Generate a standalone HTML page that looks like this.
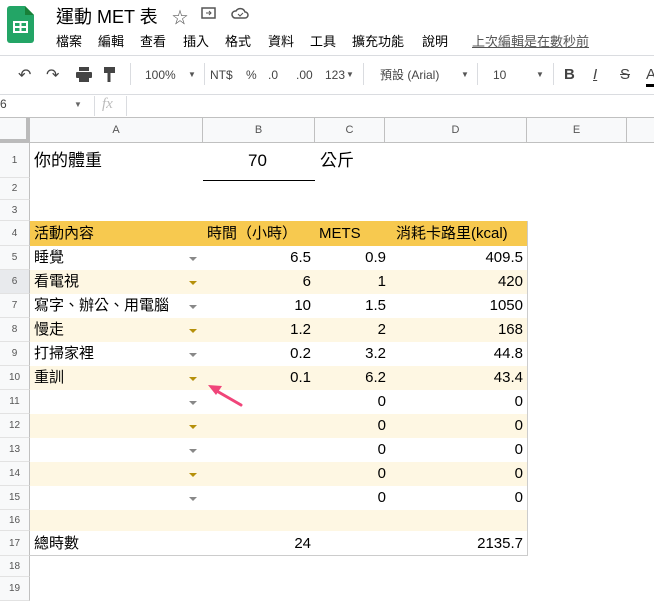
<!DOCTYPE html><html><head><meta charset="utf-8"><style>
*{margin:0;padding:0;box-sizing:border-box}
body{width:654px;height:590px;overflow:hidden;background:#fff;font-family:"Liberation Sans","Noto Sans CJK TC",sans-serif;color:#000;position:relative}
.a{position:absolute;white-space:nowrap}
.menu span{position:absolute;top:0}
.tb{color:#444;font-size:12px;line-height:16px}
.ar{color:#555;font-size:8px;line-height:16px}
.rh{position:absolute;left:0;width:30px;background:#f8f9fa;border-right:1px solid #c0c0c0;border-bottom:1px solid #e2e2e2;font-size:10px;color:#555;text-align:center}
.ch{position:absolute;top:118px;height:25px;background:#f8f9fa;border-right:1px solid #c0c0c0;border-bottom:1px solid #c0c0c0;font-size:11px;color:#555;text-align:center;line-height:25px}
.row{position:absolute;left:30px;width:497px;height:24px;font-size:15px;line-height:24px}
.row span{position:absolute}
.dd{position:absolute;left:159px;top:11px;width:0;height:0;border-left:4px solid transparent;border-right:4px solid transparent;border-top:4px solid #888}
.y .dd{border-top-color:#b5900a}
.y{background:#fef7e3}
.vd{position:absolute;top:63px;width:1px;height:22px;background:#dadce0}
</style></head><body>
<svg class="a" style="left:7px;top:6px" width="27" height="37" viewBox="0 0 27 37"><path d="M3 0h15l9 9v25a3 3 0 0 1-3 3H3a3 3 0 0 1-3-3V3a3 3 0 0 1 3-3z" fill="#23a566"/><path d="M18 0v9h9z" fill="#188038"/><rect x="7" y="16" width="13" height="10" fill="none" stroke="#fff" stroke-width="2"/><path d="M7 21h13M13.5 16v10" stroke="#fff" stroke-width="2"/></svg>
<div class="a" style="left:56px;top:5px;font-size:18px;line-height:24px">運動 MET 表</div>
<div class="a" style="left:172px;top:4px;font-size:16px;color:#555">☆</div>
<svg class="a" style="left:201px;top:6px" width="16" height="14"><rect x="1" y="2" width="13" height="10" fill="none" stroke="#555" stroke-width="1.5"/><path d="M5 7h5M8 5l2 2-2 2" stroke="#555" fill="none"/></svg>
<svg class="a" style="left:231px;top:6px" width="18" height="14"><path d="M4 12h10a3 3 0 0 0 0-6 5 5 0 0 0-9-1 3.5 3.5 0 0 0-1 7z" fill="none" stroke="#555" stroke-width="1.5"/><path d="M7 8l2 2 3-3" stroke="#555" fill="none"/></svg>
<div class="a menu" style="left:0;top:33px;font-size:13px;line-height:18px;width:460px;height:18px"><span style="left:56px">檔案</span><span style="left:98px">編輯</span><span style="left:140px">查看</span><span style="left:183px">插入</span><span style="left:225px">格式</span><span style="left:268px">資料</span><span style="left:310px">工具</span><span style="left:352px">擴充功能</span><span style="left:422px">說明</span></div>
<div class="a" style="left:472px;top:33px;font-size:13px;line-height:18px;color:#555;text-decoration:underline">上次編輯是在數秒前</div>
<div class="a" style="left:0;top:55px;width:654px;height:1px;background:#dadce0"></div>
<div class="a" style="left:18px;top:65px;font-size:16px;color:#444">↶</div>
<div class="a" style="left:46px;top:65px;font-size:16px;color:#444">↷</div>
<svg class="a" style="left:76px;top:67px" width="16" height="15"><rect x="3" y="0" width="10" height="4" fill="#444"/><rect x="0" y="5" width="16" height="6" rx="1" fill="#444"/><rect x="3" y="10" width="10" height="5" fill="#444"/></svg>
<svg class="a" style="left:104px;top:67px" width="12" height="16"><rect x="0" y="0" width="11" height="6" fill="#444"/><path d="M5 6v9" stroke="#444" stroke-width="3"/></svg>
<div class="vd" style="left:130px"></div>
<div class="a tb" style="left:145px;top:67px">100%</div><div class="a ar" style="left:188px;top:67px">▼</div>
<div class="vd" style="left:204px"></div>
<div class="a tb" style="left:210px;top:67px">NT$</div>
<div class="a tb" style="left:246px;top:67px">%</div>
<div class="a tb" style="left:268px;top:67px">.0</div>
<div class="a tb" style="left:296px;top:67px">.00</div>
<div class="a tb" style="left:325px;top:67px">123</div><div class="a ar" style="left:346px;top:67px">▼</div>
<div class="vd" style="left:363px"></div>
<div class="a tb" style="left:380px;top:67px">預設 (Arial)</div><div class="a ar" style="left:461px;top:67px">▼</div>
<div class="vd" style="left:477px"></div>
<div class="a tb" style="left:493px;top:67px">10</div><div class="a ar" style="left:536px;top:67px">▼</div>
<div class="vd" style="left:553px"></div>
<div class="a" style="left:564px;top:66px;font-size:15px;font-weight:bold;color:#444">B</div>
<div class="a" style="left:593px;top:66px;font-size:15px;font-style:italic;color:#444;text-decoration:underline">I</div>
<div class="a" style="left:620px;top:66px;font-size:15px;color:#444;text-decoration:line-through">S</div>
<div class="a" style="left:646px;top:66px;font-size:15px;color:#444">A</div>
<div class="a" style="left:646px;top:84px;width:14px;height:3px;background:#000"></div>
<div class="a" style="left:0;top:94px;width:654px;height:1px;background:#dadce0"></div>
<div class="a" style="left:0;top:97px;font-size:12px;color:#444">6</div>
<div class="a" style="left:74px;top:100px;font-size:8px;color:#666">▼</div>
<div class="a" style="left:94px;top:96px;width:1px;height:20px;background:#dadce0"></div>
<div class="a" style="left:102px;top:96px;font-size:15px;font-style:italic;color:#bbb;font-family:'Liberation Serif',serif">fx</div>
<div class="a" style="left:126px;top:96px;width:1px;height:20px;background:#dadce0"></div>
<div class="a" style="left:0;top:117px;width:654px;height:1px;background:#c0c0c0"></div>
<div class="ch" style="left:0;width:30px;border-right:4px solid #bbb;border-bottom:4px solid #bbb"></div>
<div class="ch" style="left:30px;width:173px">A</div>
<div class="ch" style="left:203px;width:112px">B</div>
<div class="ch" style="left:315px;width:70px">C</div>
<div class="ch" style="left:385px;width:142px">D</div>
<div class="ch" style="left:527px;width:100px">E</div>
<div class="ch" style="left:627px;width:27px;border-right:0"></div>
<div class="rh" style="top:143px;height:35px;line-height:35px">1</div>
<div class="rh" style="top:178px;height:22px;line-height:22px">2</div>
<div class="rh" style="top:200px;height:21px;line-height:21px">3</div>
<div class="rh" style="top:221px;height:25px;line-height:25px">4</div>
<div class="rh" style="top:246px;height:24px;line-height:24px">5</div>
<div class="rh" style="top:270px;height:24px;line-height:24px;background:#e8eaed">6</div>
<div class="rh" style="top:294px;height:24px;line-height:24px">7</div>
<div class="rh" style="top:318px;height:24px;line-height:24px">8</div>
<div class="rh" style="top:342px;height:24px;line-height:24px">9</div>
<div class="rh" style="top:366px;height:24px;line-height:24px">10</div>
<div class="rh" style="top:390px;height:24px;line-height:24px">11</div>
<div class="rh" style="top:414px;height:24px;line-height:24px">12</div>
<div class="rh" style="top:438px;height:24px;line-height:24px">13</div>
<div class="rh" style="top:462px;height:24px;line-height:24px">14</div>
<div class="rh" style="top:486px;height:24px;line-height:24px">15</div>
<div class="rh" style="top:510px;height:21px;line-height:21px">16</div>
<div class="rh" style="top:531px;height:25px;line-height:25px">17</div>
<div class="rh" style="top:556px;height:21px;line-height:21px">18</div>
<div class="rh" style="top:577px;height:24px;line-height:24px">19</div>
<div class="a" style="left:34px;top:150px;font-size:17px;line-height:22px">你的體重</div>
<div class="a" style="left:248px;top:150px;font-size:17px;line-height:22px;font-family:'Liberation Sans',sans-serif">70</div>
<div class="a" style="left:203px;top:180px;width:112px;height:1px;background:#000"></div>
<div class="a" style="left:320px;top:150px;font-size:17px;line-height:22px">公斤</div>
<div class="a" style="left:30px;top:221px;width:498px;height:335px;border-right:1px solid #ccc;border-bottom:1px solid #ccc"></div>
<div class="row" style="top:221px;height:25px;background:#f7c94f;line-height:25px"><span style="left:4px">活動內容</span><span style="left:177px">時間（小時）</span><span style="left:289px">METS</span><span style="left:366px">消耗卡路里(kcal)</span></div>
<div class="row" style="top:246px"><span style="left:4px">睡覺</span><i class="dd"></i><span style="right:216px">6.5</span><span style="right:141px">0.9</span><span style="right:4px">409.5</span></div>
<div class="row y" style="top:270px"><span style="left:4px">看電視</span><i class="dd"></i><span style="right:216px">6</span><span style="right:141px">1</span><span style="right:4px">420</span></div>
<div class="row" style="top:294px"><span style="left:4px">寫字、辦公、用電腦</span><i class="dd"></i><span style="right:216px">10</span><span style="right:141px">1.5</span><span style="right:4px">1050</span></div>
<div class="row y" style="top:318px"><span style="left:4px">慢走</span><i class="dd"></i><span style="right:216px">1.2</span><span style="right:141px">2</span><span style="right:4px">168</span></div>
<div class="row" style="top:342px"><span style="left:4px">打掃家裡</span><i class="dd"></i><span style="right:216px">0.2</span><span style="right:141px">3.2</span><span style="right:4px">44.8</span></div>
<div class="row y" style="top:366px"><span style="left:4px">重訓</span><i class="dd"></i><span style="right:216px">0.1</span><span style="right:141px">6.2</span><span style="right:4px">43.4</span></div>
<div class="row" style="top:390px"><i class="dd"></i><span style="right:141px">0</span><span style="right:4px">0</span></div>
<div class="row y" style="top:414px"><i class="dd"></i><span style="right:141px">0</span><span style="right:4px">0</span></div>
<div class="row" style="top:438px"><i class="dd"></i><span style="right:141px">0</span><span style="right:4px">0</span></div>
<div class="row y" style="top:462px"><i class="dd"></i><span style="right:141px">0</span><span style="right:4px">0</span></div>
<div class="row" style="top:486px"><i class="dd"></i><span style="right:141px">0</span><span style="right:4px">0</span></div>
<div class="row y" style="top:510px;height:21px"></div>
<div class="row" style="top:531px;height:25px;line-height:25px"><span style="left:4px">總時數</span><span style="right:216px">24</span><span style="right:4px">2135.7</span></div>
<svg class="a" style="left:205px;top:382px" width="40" height="26"><path d="M36 23L10 8" stroke="#f0457a" stroke-width="3" stroke-linecap="round"/><path d="M3 3l14 1-6 9z" fill="#f0457a"/></svg>
</body></html>
